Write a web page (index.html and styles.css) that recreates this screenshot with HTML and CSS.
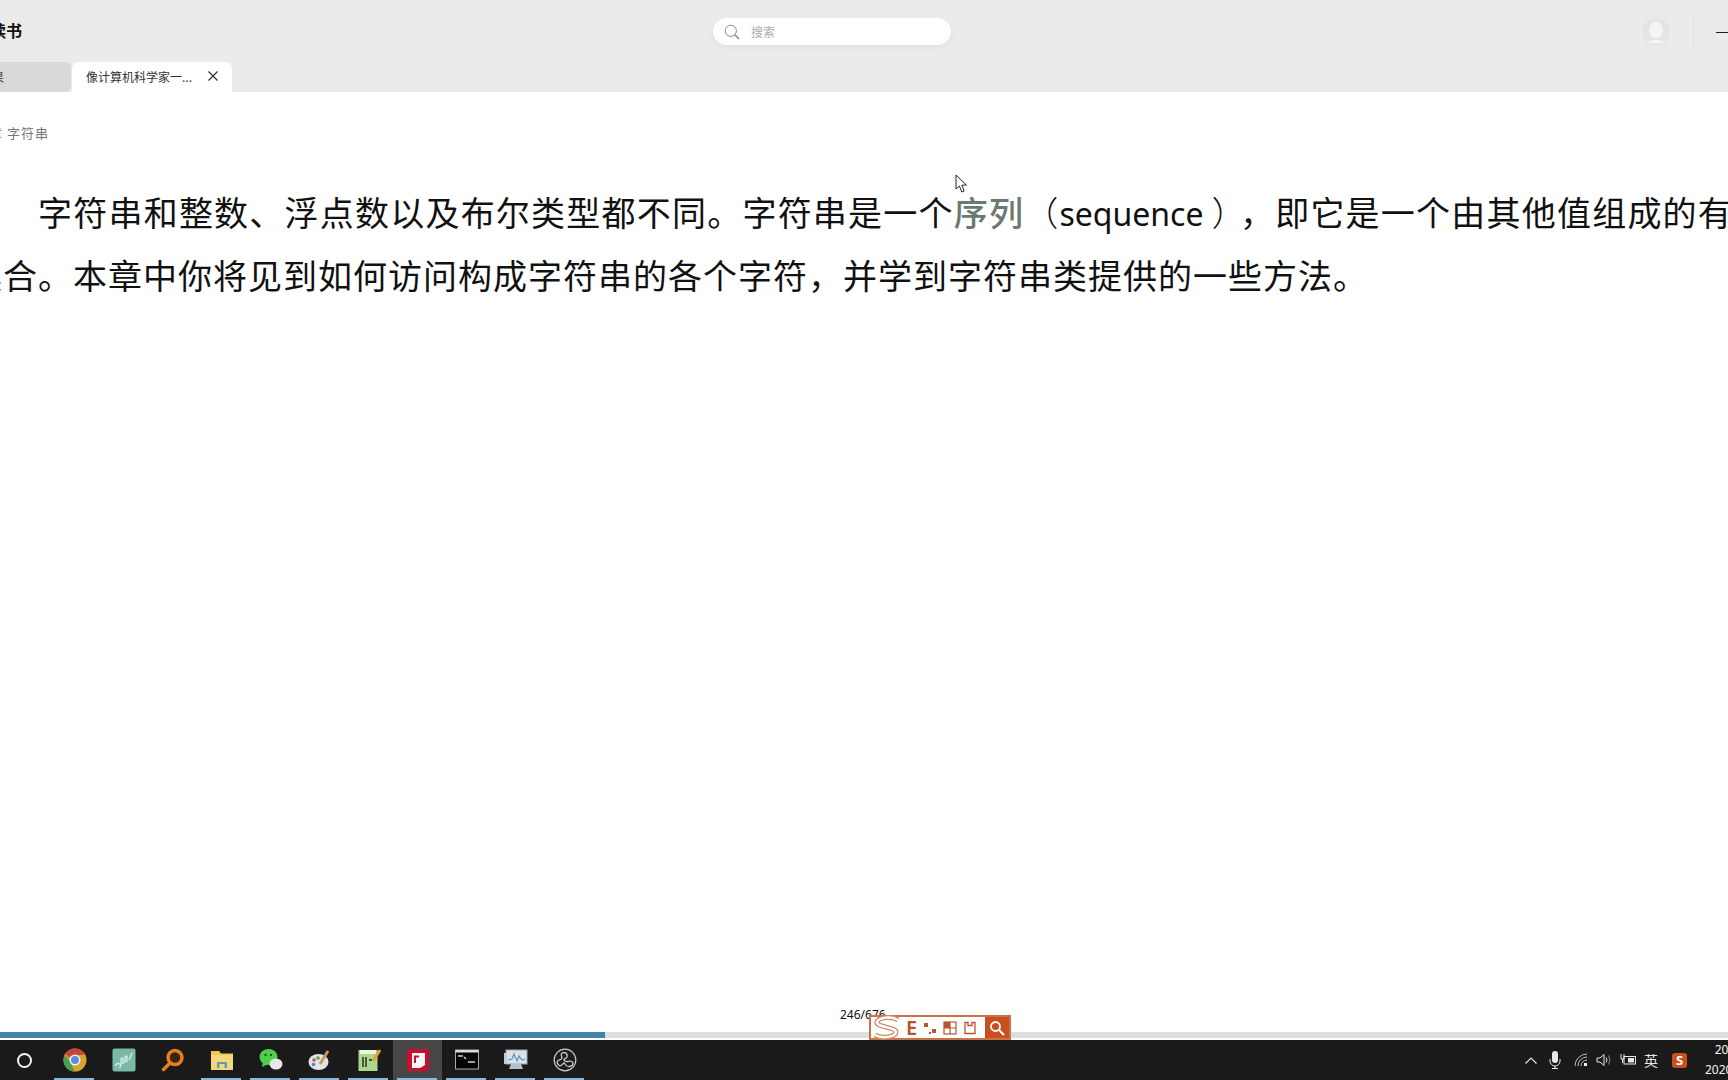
FILE: index.html
```html
<!DOCTYPE html>
<html lang="zh">
<head>
<meta charset="utf-8">
<title>读书</title>
<link rel="stylesheet" href="styles.css">
</head>
<body>
<div class="window">
  <header class="chrome">
    <div class="toprow">
      <div class="app-title">读书</div>
      <div class="search">
        <svg class="search-icon" viewBox="0 0 16 16" width="16" height="16"><circle cx="6.8" cy="6.8" r="5.6" fill="none" stroke="#8a8a8a" stroke-width="1"/><path d="M10.8 10.8 L15 15" stroke="#8a8a8a" stroke-width="1.6"/></svg>
        <span class="search-text">搜索</span>
      </div>
      <div class="controls">
        <svg class="avatar" viewBox="0 0 28 28" width="28" height="28"><circle cx="14" cy="14" r="13.5" fill="#e4e4e4"/><ellipse cx="14" cy="12" rx="7" ry="8.5" fill="#f4f4f6"/><path d="M6 25 C8 21 20 21 22 25 Z" fill="#f8f8f8"/></svg>
        <span class="divider"></span>
        <span class="minimize"></span>
      </div>
    </div>
    <div class="tabs">
      <div class="tab tab-off"><span class="tab-off-text">结果</span></div>
      <div class="tab tab-on">
        <span class="tab-label">像计算机科学家一...</span>
        <svg class="tab-close" viewBox="0 0 10 10" width="10" height="10"><path d="M0.5 0.5 L9.5 9.5 M9.5 0.5 L0.5 9.5" stroke="#333" stroke-width="1.2"/></svg>
      </div>
    </div>
  </header>

  <main class="content">
    <div class="crumb">章 字符串</div>
    <p class="para">字符串和整数、浮点数以及布尔类型都不同。字符串是一个<a class="term">序列</a><span class="paren-open">（</span><span class="latin">sequence</span><span class="paren-close">）</span>，即它是一个由其他值组成的有序集合。本章中你将见到如何访问构成字符串的各个字符，并学到字符串类提供的一些方法。</p>
    <svg class="cursor" viewBox="0 0 13 20" width="13" height="20"><path d="M1 1 L1 15 L4.4 12 L6.8 18 L9.2 17 L6.8 11.2 L11.4 11 Z" fill="#fff" stroke="#222" stroke-width="1"/></svg>
  </main>

  <div class="pagebar">
    <span class="page-num">246/676</span>
    <div class="progress"><div class="progress-fill" style="width:605px"></div></div>
    <div class="ime">
      <svg class="ime-s" viewBox="0 0 30 26" width="30" height="26"><path d="M26 5 C20 1 7 2 5 7 C3 12 24 12 24 17 C24 22 10 24 3 20" fill="none" stroke="#d2895f" stroke-width="5"/><path d="M26 5 C20 1 7 2 5 7 C3 12 24 12 24 17 C24 22 10 24 3 20" fill="none" stroke="#fff" stroke-width="2.500"/></svg>
      <span class="ime-e">E</span>
      <svg viewBox="0 0 14 14" width="14" height="14"><rect x="1" y="2" width="4" height="4" fill="#b9552c"/><rect x="9" y="8" width="4" height="4" fill="#b9552c"/><rect x="6" y="11" width="2" height="2" fill="#b9552c"/></svg>
      <svg viewBox="0 0 14 14" width="14" height="14"><rect x="1" y="1" width="12" height="12" fill="none" stroke="#b9552c" stroke-width="1.2"/><rect x="1" y="1" width="6" height="6" fill="#b9552c"/><path d="M1 7H13M7 1V13" stroke="#b9552c" stroke-width="1.2"/></svg>
      <svg viewBox="0 0 14 14" width="14" height="14"><path d="M2 1.500H5V4.500H9V1.500H12V12.500H2Z" fill="none" stroke="#b9552c" stroke-width="1.300"/></svg>
      <span class="ime-search"><svg viewBox="0 0 16 16" width="16" height="16"><circle cx="6.500" cy="6.500" r="4.500" fill="none" stroke="#fff" stroke-width="1.800"/><path d="M10 10 L15 15" stroke="#fff" stroke-width="2.200"/></svg></span>
    </div>
  </div>

  <footer class="taskbar">
    <div class="task-start"><span class="ring"></span></div>
    <div class="task run"><svg viewBox="0 0 24 24" width="24" height="24"><circle cx="12" cy="12" r="11.500" fill="#d8a52e"/><path d="M12 .5 A11.500 11.500 0 0 1 22 6.500 L12 7.500 L5 9 L2.500 5.500 A11.500 11.500 0 0 1 12 .5Z" fill="#c9423a"/><path d="M1.900 6.500 L7.500 14.500 L11.500 23.500 A11.500 11.500 0 0 1 1.900 6.500Z" fill="#4a9e52"/><circle cx="12" cy="12" r="5.500" fill="#f2f2f2"/><circle cx="12" cy="12" r="4" fill="#5b8fd6"/></svg></div>
    <div class="task"><svg viewBox="0 0 24 24" width="24" height="24"><rect x=".5" y=".5" width="23" height="23" rx="2" fill="#7ab9a8"/><path d="M3.500 18 a2.500 2.500 0 1 1 4 2 M9 17 V11 q1.500 -2 2 0 V16 M13 15 V9 q1.500 -2 2 0 V14 M17 12 L20 5" fill="none" stroke="#d9eee7" stroke-width="1.300"/></svg></div>
    <div class="task"><svg viewBox="0 0 24 24" width="24" height="24"><circle cx="14" cy="9.500" r="7" fill="#3a2410" stroke="#e2801f" stroke-width="3.500"/><path d="M9 15 L2.500 21.500" stroke="#e2801f" stroke-width="3.500" stroke-linecap="round"/></svg></div>
    <div class="task run"><svg viewBox="0 0 24 24" width="24" height="24"><path d="M1 3H9L11 5.500H23V22H1Z" fill="#f0c84e"/><rect x="1" y="7" width="22" height="15" fill="#f5d978"/><rect x="7" y="14" width="10" height="6" fill="#5f9cb6"/><rect x="9.500" y="16" width="5" height="6" fill="#f5d978"/></svg></div>
    <div class="task run"><svg viewBox="0 0 24 24" width="24" height="24"><ellipse cx="9.500" cy="9" rx="9" ry="8" fill="#4fd04c"/><path d="M4 14 L3 19 L9 16Z" fill="#4fd04c"/><ellipse cx="17" cy="16" rx="6.500" ry="5.500" fill="#e8e8e8"/><circle cx="6.500" cy="7" r="1.200" fill="#1a5a1a"/><circle cx="12" cy="7" r="1.200" fill="#1a5a1a"/></svg></div>
    <div class="task run"><svg viewBox="0 0 24 24" width="24" height="24"><ellipse cx="10.500" cy="14" rx="10" ry="8" fill="#dfe4e6"/><circle cx="6" cy="12" r="1.800" fill="#d34b4b"/><circle cx="10" cy="10" r="1.800" fill="#4fa552"/><circle cx="5.500" cy="16.500" r="1.800" fill="#4f7fd0"/><path d="M12 16 L20 3" stroke="#c99a5b" stroke-width="3"/><path d="M11 17 L13 20 L10 21Z" fill="#eee"/></svg></div>
    <div class="task run"><svg viewBox="0 0 24 24" width="24" height="24"><rect x="1.500" y="2" width="19" height="21" fill="#a9d88a"/><rect x="3" y="2" width="16" height="4" fill="#e9f3e0"/><path d="M6 9V19M9 9V19M12 12H15M16 12H18" stroke="#222" stroke-width="1.400"/><path d="M23 2 L16 13" stroke="#d8a33b" stroke-width="3"/></svg></div>
    <div class="task run active"><svg viewBox="0 0 24 24" width="24" height="24"><rect x="1" y="1" width="22" height="22" rx="2" fill="#c8102e"/><path d="M6 5H19V17L14 20H6Z" fill="#f8f8f8"/><path d="M9 15V8.500H13" fill="none" stroke="#c8102e" stroke-width="2"/></svg></div>
    <div class="task run"><svg viewBox="0 0 24 24" width="24" height="24"><rect x=".5" y="2" width="23" height="19" fill="#050505" stroke="#a9a9a9"/><rect x=".5" y="2" width="23" height="2.500" fill="#d9d9d9"/><path d="M3 8H8M9 9L11 11M13 14H20" stroke="#cfcfcf" stroke-width="1.300"/></svg></div>
    <div class="task run"><svg viewBox="0 0 24 24" width="24" height="24"><rect x="2" y="2" width="21" height="14" fill="#d9e3ec" stroke="#9aa5ae"/><path d="M4 12L8 11L10 6L13 13L15 8L18 12L21 11" fill="none" stroke="#5d90c6" stroke-width="1.200"/><path d="M7 16L5 21H19L17 16Z" fill="#b9bfc4"/><rect x="0" y="5" width="3" height="11" fill="#c4ccd2"/></svg></div>
    <div class="task run"><svg viewBox="0 0 24 24" width="24" height="24"><circle cx="12" cy="12" r="10.800" fill="#1d1d1d" stroke="#c9c9c9" stroke-width="1.200"/><path d="M8 6 C11 3 15 5 14 9 C13 11 9 11 12 13 C14 15 18 11 20 15 C20 19 14 20 12 16 C11 13 10 17 7 18 C4 17 3 13 6 12 C8 11 10 12 8 6" fill="none" stroke="#c9c9c9" stroke-width="1.300"/></svg></div>
    <div class="tray">
      <svg class="tray-chevron" viewBox="0 0 12 7" width="12" height="7"><path d="M.5 6.500L6 1L11.500 6.500" fill="none" stroke="#e8e8e8" stroke-width="1.200"/></svg>
      <svg class="tray-mic" viewBox="0 0 12 18" width="12" height="18"><rect x="3" y="0" width="6" height="12" rx="3" fill="#e8e8e8"/><path d="M1 8V10A5 5 0 0 0 11 10V8M6 15V17M3 17.500H9" fill="none" stroke="#e8e8e8" stroke-width="1"/></svg>
      <svg class="tray-wifi" viewBox="0 0 14 14" width="14" height="14"><path d="M1 13A12 12 0 0 1 13 1M4 13A9 9 0 0 1 13 4M7 13A6 6 0 0 1 13 7" fill="none" stroke="#bdbdbd" stroke-width="1"/><rect x="10" y="10" width="3" height="3" fill="#eee"/></svg>
      <svg class="tray-vol" viewBox="0 0 16 14" width="16" height="14"><path d="M1 5H4L8 1.500V12.500L4 9H1Z" fill="none" stroke="#e8e8e8"/><path d="M10 4.500Q12 7 10 9.500" fill="none" stroke="#e8e8e8"/><path d="M12.500 2.500Q15.500 7 12.500 11.500" fill="none" stroke="#8e8e8e"/></svg>
      <svg class="tray-batt" viewBox="0 0 16 12" width="16" height="12"><rect x="4" y="2.500" width="11.500" height="7.500" fill="none" stroke="#e8e8e8"/><rect x="8" y="4" width="6" height="4.500" fill="#e8e8e8"/><path d="M1 0V5H4V0M2.500 5V9" fill="none" stroke="#e8e8e8"/></svg>
      <span class="tray-ime">英</span>
      <span class="tray-sogou">S</span>
      <div class="clock"><span>20:38</span><span>2020/7/5</span></div>
    </div>
  </footer>
</div>
</body>
</html>
```

FILE: styles.css
```css
* { box-sizing: border-box; }
html, body { margin: 0; height: 100%; overflow: hidden; }
body { font-family: "Noto Sans", "Noto Sans CJK SC", sans-serif; background: #fff; color: #111; }

.window { width: 1728px; height: 1080px; display: flex; flex-direction: column; overflow: hidden; }

.chrome { flex: none; height: 92px; background: #ebebeb; display: flex; flex-direction: column; }
.toprow { height: 62px; display: grid; grid-template-columns: 713px 238px 1fr; align-items: start; }
.app-title { font-size: 16px; font-weight: 700; line-height: 22px; margin: 19px 0 0 -10px; font-family: "Noto Sans CJK SC", sans-serif; color: #111; }
.search { margin-top: 18px; height: 27px; background: #fff; border-radius: 14px; display: flex; align-items: center; padding-left: 11px; box-shadow: 0 2px 6px rgba(0,0,0,.05); }
.search-icon { flex: none; }
.search-text { margin-left: 11px; font-size: 12px; color: #aaa; font-family: "Noto Sans CJK SC", sans-serif; }
.controls { display: flex; align-items: center; justify-content: flex-end; height: 28px; margin-top: 18px; }
.avatar { margin-right: 23px; }
.divider { width: 1px; height: 28px; background: #e0e0e0; margin-right: 22px; }
.minimize { width: 12px; height: 1px; background: #222; }

.tabs { height: 30px; display: flex; align-items: stretch; gap: 1px; }
.tab { display: flex; align-items: center; font-size: 12px; padding-bottom: 2px; font-family: "Noto Sans CJK SC", sans-serif; }
.tab-off { width: 71px; background: #d9d9d9; border-radius: 0 6px 6px 0; overflow: hidden; color: #444; }
.tab-off-text { margin-left: -20px; }
.tab-on { width: 160px; background: #fff; border-radius: 6px 6px 0 0; padding: 0 14px 2px; justify-content: space-between; color: #333; }
.tab-close { flex: none; }

.content { flex: 1; position: relative; overflow: hidden; background: #fff; }
.crumb { margin: 32px 0 0 -11px; font-size: 13px; line-height: 18px; letter-spacing: 1px; color: #777; font-family: "Noto Sans CJK SC", sans-serif; }
.para { margin: 38px 0 0 -32px; width: 1800px; font-size: 34px; line-height: 63px; letter-spacing: 1px; text-indent: 70px; text-align: justify; color: #111; font-family: "Noto Sans CJK SC", sans-serif; }
.term { color: #6b7a70; font-weight: 500; }
.paren-open { font-weight: 300; }
.paren-close { font-weight: 300; padding-right: 10px; }
.latin { font-family: "Noto Sans", sans-serif; font-size: 32px; line-height: 1; letter-spacing: 0; padding: 0 8px 0 0; }
.cursor { position: absolute; left: 955px; top: 82px; }

.pagebar { flex: none; height: 16px; position: relative; background: #fff; display: flex; flex-direction: column; justify-content: flex-end; }
.page-num { position: absolute; left: 840px; top: -17px; font-size: 12px; line-height: 16px; color: #111; }
.progress { height: 8px; border-bottom: 2px solid #fff; background: #dedede; }
.progress-fill { height: 6px; background: #3f85a8; }
.ime { position: absolute; left: 869px; top: -9px; width: 142px; height: 25px; background: #fff; border: 2px solid #c8734a; display: flex; align-items: center; gap: 6px; padding-left: 2px; }
.ime-s { flex: none; margin-left: -1px; }
.ime-e { color: #b9552c; font-size: 20px; font-weight: 600; line-height: 20px; margin-left: -2px; }
.ime-search { margin-left: auto; width: 24px; height: 21px; background: #c9501e; display: flex; align-items: center; justify-content: center; }

.taskbar { flex: none; height: 40px; background: #1a1a1a; display: flex; align-items: stretch; }
.task-start { width: 51px; display: flex; align-items: center; justify-content: center; margin-left: -1px; }
.ring { width: 15px; height: 15px; border-radius: 50%; border: 2.500px solid #f2f2f2; }
.task { width: 49px; display: flex; align-items: center; justify-content: center; position: relative; }
.task.run::after { content: ""; position: absolute; left: 4px; right: 5px; bottom: 0; height: 2px; background: #8fb8d8; }
.task.active { background: #474747; }
.tray { flex: 1; display: flex; align-items: center; justify-content: flex-end; color: #e8e8e8; }
.tray-mic { margin-left: 12px; }
.tray-wifi { margin-left: 13px; }
.tray-vol { margin-left: 8px; }
.tray-batt { margin-left: 8px; }
.tray-ime { margin-left: 8px; font-size: 14px; font-family: "Noto Sans CJK SC", sans-serif; }
.tray-sogou { margin-left: 14px; width: 15px; height: 15px; border-radius: 3px; background: #c9501e; color: #fff; font-size: 13px; font-weight: 700; line-height: 15px; text-align: center; }
.clock { flex: none; width: 60px; margin-left: 13px; margin-right: -32px; display: flex; flex-direction: column; align-items: center; font-size: 12px; line-height: 20px; color: #f2f2f2; white-space: nowrap; }
```
